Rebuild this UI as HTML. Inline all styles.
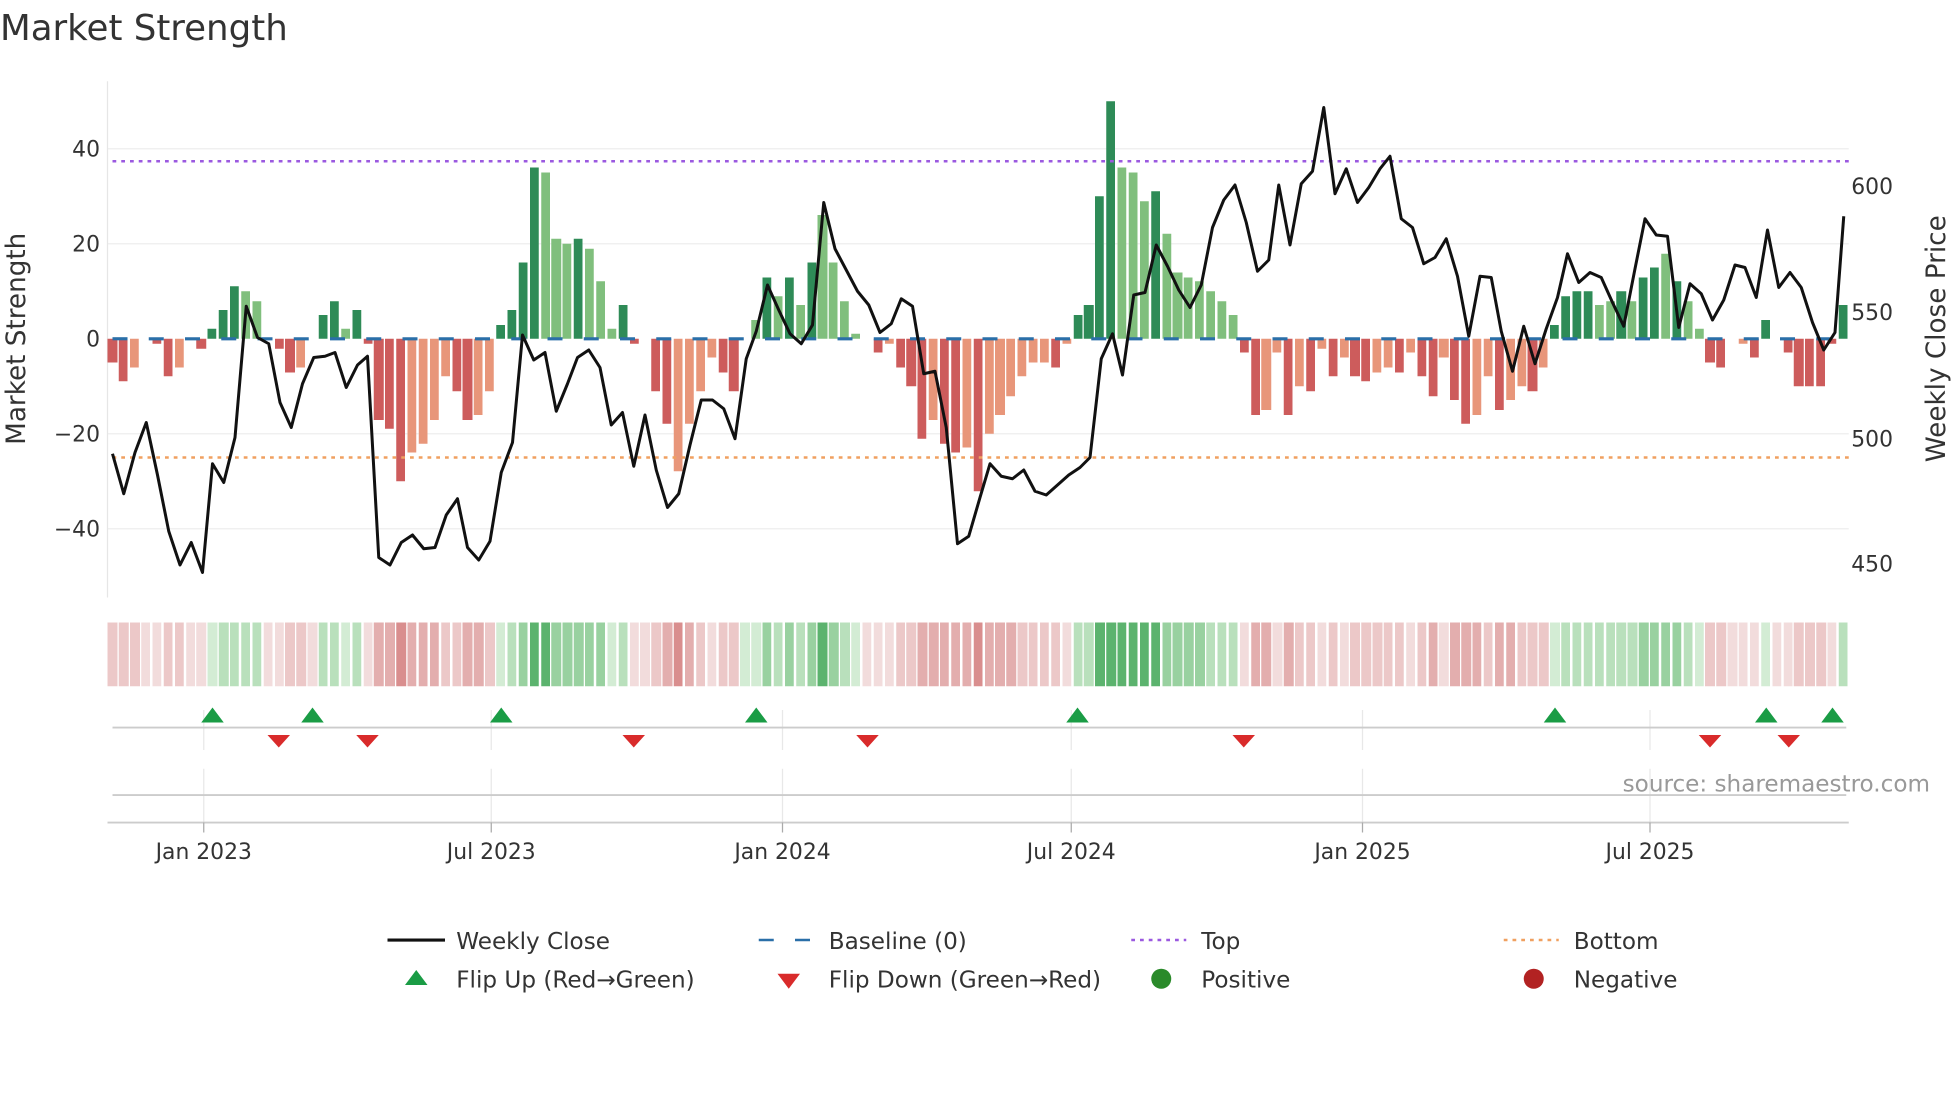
<!DOCTYPE html>
<html><head><meta charset="utf-8"><style>
html,body{margin:0;padding:0;background:#fff;overflow:hidden;}
#w{position:absolute;left:0;top:0;width:1568px;height:882px;transform:scale(1.25);transform-origin:0 0;}
svg{position:absolute;left:0;top:0;display:block;font-family:"DejaVu Sans","Liberation Sans",sans-serif;}
.row{position:absolute;left:86.4px;width:1392.2px;display:flex;justify-content:space-between;font-size:3.8px;}
.row i{display:block;width:7.2px;flex:none;}
#pos{top:65px;height:206px;align-items:flex-end;}
#neg{top:271px;height:207px;align-items:flex-start;}
#heat{top:498px;height:51px;}
#heat i{height:51px;width:7.4px;}
.a{background:#2e8b57}.b{background:#80bf7d}.c{background:#cd5c5c}.d{background:#e8967a}
.r1{background:#f2dcdc}.r2{background:#ecc8c8}.r3{background:#e3aeae}.r4{background:#d98e8e}
.g1{background:#d3ecd4}.g2{background:#b9e0bc}.g3{background:#99d1a0}.g4{background:#5cb36e}
</style></head><body><div id="w">
<svg width="1568" height="882" viewBox="0 0 1568 882" xmlns="http://www.w3.org/2000/svg">
<text x="0" y="32" font-size="28.5" fill="#333">Market Strength</text>
<g stroke="#eeeeee" stroke-width="1">
<line x1="86" x2="1479" y1="119" y2="119"/><line x1="86" x2="1479" y1="195" y2="195"/>
<line x1="86" x2="1479" y1="347" y2="347"/><line x1="86" x2="1479" y1="423" y2="423"/>
</g>
<line x1="86" x2="86" y1="65" y2="478" stroke="#e6e6e6"/>
</svg>
<div class="row" id="pos"><i></i><i></i><i></i><i></i><i></i><i></i><i></i><i></i><i></i><i class=a style=height:2em></i><i class=a style=height:6em></i><i class=a style=height:11em></i><i class=b style=height:10em></i><i class=b style=height:8em></i><i></i><i></i><i></i><i></i><i></i><i class=a style=height:5em></i><i class=a style=height:8em></i><i class=b style=height:2em></i><i class=a style=height:6em></i><i></i><i></i><i></i><i></i><i></i><i></i><i></i><i></i><i></i><i></i><i></i><i></i><i class=a style=height:3em></i><i class=a style=height:6em></i><i class=a style=height:16em></i><i class=a style=height:36em></i><i class=b style=height:35em></i><i class=b style=height:21em></i><i class=b style=height:20em></i><i class=a style=height:21em></i><i class=b style=height:19em></i><i class=b style=height:12em></i><i class=b style=height:2em></i><i class=a style=height:7em></i><i></i><i></i><i></i><i></i><i></i><i></i><i></i><i></i><i></i><i></i><i></i><i class=b style=height:4em></i><i class=a style=height:13em></i><i class=b style=height:9em></i><i class=a style=height:13em></i><i class=b style=height:7em></i><i class=a style=height:16em></i><i class=b style=height:26em></i><i class=b style=height:16em></i><i class=b style=height:8em></i><i class=b style=height:1em></i><i></i><i></i><i></i><i></i><i></i><i></i><i></i><i></i><i></i><i></i><i></i><i></i><i></i><i></i><i></i><i></i><i></i><i></i><i></i><i class=a style=height:5em></i><i class=a style=height:7em></i><i class=a style=height:30em></i><i class=a style=height:50em></i><i class=b style=height:36em></i><i class=b style=height:35em></i><i class=b style=height:29em></i><i class=a style=height:31em></i><i class=b style=height:22em></i><i class=b style=height:14em></i><i class=b style=height:13em></i><i class=b style=height:12em></i><i class=b style=height:10em></i><i class=b style=height:8em></i><i class=b style=height:5em></i><i></i><i></i><i></i><i></i><i></i><i></i><i></i><i></i><i></i><i></i><i></i><i></i><i></i><i></i><i></i><i></i><i></i><i></i><i></i><i></i><i></i><i></i><i></i><i></i><i></i><i></i><i></i><i></i><i class=a style=height:3em></i><i class=a style=height:9em></i><i class=a style=height:10em></i><i class=a style=height:10em></i><i class=b style=height:7em></i><i class=b style=height:8em></i><i class=a style=height:10em></i><i class=b style=height:8em></i><i class=a style=height:13em></i><i class=a style=height:15em></i><i class=b style=height:18em></i><i class=a style=height:12em></i><i class=b style=height:8em></i><i class=b style=height:2em></i><i></i><i></i><i></i><i></i><i></i><i class=a style=height:4em></i><i></i><i></i><i></i><i></i><i></i><i></i><i class=a style=height:7em></i></div>
<div class="row" id="neg"><i class=c style=height:5em></i><i class=c style=height:9em></i><i class=d style=height:6em></i><i></i><i class=c style=height:1em></i><i class=c style=height:8em></i><i class=d style=height:6em></i><i></i><i class=c style=height:2em></i><i></i><i></i><i></i><i></i><i></i><i></i><i class=c style=height:2em></i><i class=c style=height:7em></i><i class=d style=height:6em></i><i></i><i></i><i></i><i></i><i></i><i class=c style=height:1em></i><i class=c style=height:17em></i><i class=c style=height:19em></i><i class=c style=height:30em></i><i class=d style=height:24em></i><i class=d style=height:22em></i><i class=d style=height:17em></i><i class=d style=height:8em></i><i class=c style=height:11em></i><i class=c style=height:17em></i><i class=d style=height:16em></i><i class=d style=height:11em></i><i></i><i></i><i></i><i></i><i></i><i></i><i></i><i></i><i></i><i></i><i></i><i></i><i class=c style=height:1em></i><i></i><i class=c style=height:11em></i><i class=c style=height:18em></i><i class=d style=height:28em></i><i class=d style=height:18em></i><i class=d style=height:11em></i><i class=d style=height:4em></i><i class=c style=height:7em></i><i class=c style=height:11em></i><i></i><i></i><i></i><i></i><i></i><i></i><i></i><i></i><i></i><i></i><i></i><i></i><i class=c style=height:3em></i><i class=d style=height:1em></i><i class=c style=height:6em></i><i class=c style=height:10em></i><i class=c style=height:21em></i><i class=d style=height:17em></i><i class=c style=height:22em></i><i class=c style=height:24em></i><i class=d style=height:23em></i><i class=c style=height:32em></i><i class=d style=height:20em></i><i class=d style=height:16em></i><i class=d style=height:12em></i><i class=d style=height:8em></i><i class=d style=height:5em></i><i class=d style=height:5em></i><i class=c style=height:6em></i><i class=d style=height:1em></i><i></i><i></i><i></i><i></i><i></i><i></i><i></i><i></i><i></i><i></i><i></i><i></i><i></i><i></i><i></i><i class=c style=height:3em></i><i class=c style=height:16em></i><i class=d style=height:15em></i><i class=d style=height:3em></i><i class=c style=height:16em></i><i class=d style=height:10em></i><i class=c style=height:11em></i><i class=d style=height:2em></i><i class=c style=height:8em></i><i class=d style=height:4em></i><i class=c style=height:8em></i><i class=c style=height:9em></i><i class=d style=height:7em></i><i class=d style=height:6em></i><i class=c style=height:7em></i><i class=d style=height:3em></i><i class=c style=height:8em></i><i class=c style=height:12em></i><i class=d style=height:4em></i><i class=c style=height:13em></i><i class=c style=height:18em></i><i class=d style=height:16em></i><i class=d style=height:8em></i><i class=c style=height:15em></i><i class=d style=height:13em></i><i class=d style=height:10em></i><i class=c style=height:11em></i><i class=d style=height:6em></i><i></i><i></i><i></i><i></i><i></i><i></i><i></i><i></i><i></i><i></i><i></i><i></i><i></i><i></i><i class=c style=height:5em></i><i class=c style=height:6em></i><i></i><i class=d style=height:1em></i><i class=c style=height:4em></i><i></i><i></i><i class=c style=height:3em></i><i class=c style=height:10em></i><i class=c style=height:10em></i><i class=c style=height:10em></i><i class=c style=height:1em></i><i></i></div>
<div class="row" id="heat"><i class=r2></i><i class=r2></i><i class=r2></i><i class=r1></i><i class=r1></i><i class=r2></i><i class=r2></i><i class=r1></i><i class=r1></i><i class=g1></i><i class=g2></i><i class=g2></i><i class=g2></i><i class=g2></i><i class=r1></i><i class=r1></i><i class=r2></i><i class=r2></i><i class=r1></i><i class=g2></i><i class=g2></i><i class=g1></i><i class=g2></i><i class=r1></i><i class=r3></i><i class=r3></i><i class=r4></i><i class=r3></i><i class=r3></i><i class=r3></i><i class=r2></i><i class=r2></i><i class=r3></i><i class=r3></i><i class=r2></i><i class=g1></i><i class=g2></i><i class=g3></i><i class=g4></i><i class=g4></i><i class=g3></i><i class=g3></i><i class=g3></i><i class=g3></i><i class=g3></i><i class=g1></i><i class=g2></i><i class=r1></i><i class=r1></i><i class=r2></i><i class=r3></i><i class=r4></i><i class=r3></i><i class=r2></i><i class=r1></i><i class=r2></i><i class=r2></i><i class=g1></i><i class=g1></i><i class=g3></i><i class=g2></i><i class=g3></i><i class=g2></i><i class=g3></i><i class=g4></i><i class=g3></i><i class=g2></i><i class=g1></i><i class=r1></i><i class=r1></i><i class=r1></i><i class=r2></i><i class=r2></i><i class=r3></i><i class=r3></i><i class=r3></i><i class=r3></i><i class=r3></i><i class=r4></i><i class=r3></i><i class=r3></i><i class=r3></i><i class=r2></i><i class=r2></i><i class=r2></i><i class=r2></i><i class=r1></i><i class=g2></i><i class=g2></i><i class=g4></i><i class=g4></i><i class=g4></i><i class=g4></i><i class=g4></i><i class=g4></i><i class=g3></i><i class=g3></i><i class=g3></i><i class=g3></i><i class=g2></i><i class=g2></i><i class=g2></i><i class=r1></i><i class=r3></i><i class=r3></i><i class=r1></i><i class=r3></i><i class=r2></i><i class=r2></i><i class=r1></i><i class=r2></i><i class=r1></i><i class=r2></i><i class=r2></i><i class=r2></i><i class=r2></i><i class=r2></i><i class=r1></i><i class=r2></i><i class=r3></i><i class=r1></i><i class=r3></i><i class=r3></i><i class=r3></i><i class=r2></i><i class=r3></i><i class=r3></i><i class=r2></i><i class=r2></i><i class=r2></i><i class=g1></i><i class=g2></i><i class=g2></i><i class=g2></i><i class=g2></i><i class=g2></i><i class=g2></i><i class=g2></i><i class=g3></i><i class=g3></i><i class=g3></i><i class=g3></i><i class=g2></i><i class=g1></i><i class=r2></i><i class=r2></i><i class=r1></i><i class=r1></i><i class=r1></i><i class=g1></i><i class=r1></i><i class=r1></i><i class=r2></i><i class=r2></i><i class=r2></i><i class=r1></i><i class=g2></i></div>
<svg width="1568" height="882" viewBox="0 0 1568 882" xmlns="http://www.w3.org/2000/svg">
<g font-size="17.5" fill="#333" text-anchor="end">
<text x="80" y="125">40</text><text x="80" y="201">20</text><text x="80" y="277">0</text>
<text x="80" y="353">−20</text><text x="80" y="429">−40</text></g>
<g font-size="17.5" fill="#333">
<text x="1481" y="155">600</text><text x="1481" y="256">550</text><text x="1481" y="357">500</text><text x="1481" y="457">450</text></g>
<text transform="translate(20,271) rotate(-90)" font-size="21" fill="#333" text-anchor="middle">Market Strength</text>
<text transform="translate(1556,271) rotate(-90)" font-size="21" fill="#333" text-anchor="middle">Weekly Close Price</text>
<line x1="90" x2="1479" y1="129" y2="129" stroke="#9b59e0" stroke-width="2" stroke-dasharray="3,4"/>
<line x1="90" x2="1479" y1="366" y2="366" stroke="#f0a060" stroke-width="2" stroke-dasharray="3,4"/>
<line x1="90" x2="1479" y1="271" y2="271" stroke="#2a6fa8" stroke-width="2.5" stroke-dasharray="12,17"/>
<polyline fill="none" stroke="#111" stroke-width="2.4" stroke-linejoin="round" points="90,363 99,395 108,362 117,338 126,380 135,425 144,452 153,434 162,458 170,371 179,386 188,350 197,245 206,270 215,275 224,322 233,342 242,307 251,286 260,285 268,282 277,310 286,292 294,285 303,446 312,452 321,434 330,428 339,439 348,438 357,412 366,399 374,438 383,448 392,433 401,378 410,354 418,268 427,288 436,282 445,329 454,307 462,286 471,280 480,294 489,340 498,330 507,373 516,332 525,376 534,406 543,395 552,356 561,320 570,320 579,327 588,351 597,287 605,265 614,228 623,248 632,267 641,275 650,260 659,162 668,199 677,216 686,233 695,244 704,266 713,259 721,239 730,245 739,299 748,297 757,342 766,435 775,429 784,398 792,371 801,381 810,383 819,376 828,393 837,396 846,388 855,380 864,374 872,366 881,287 890,267 898,300 907,236 916,234 925,196 934,213 943,232 952,246 961,228 970,182 979,160 988,148 997,178 1006,217 1015,208 1023,148 1032,196 1041,147 1050,137 1059,86 1068,155 1077,135 1086,162 1095,150 1104,135 1112,125 1121,175 1130,182 1139,211 1148,206 1157,191 1166,221 1175,269 1184,221 1193,222 1201,265 1210,297 1219,261 1228,291 1237,263 1246,238 1254,203 1263,226 1272,218 1281,222 1290,242 1299,261 1308,215 1316,175 1325,188 1334,189 1343,262 1352,227 1361,235 1370,256 1379,240 1388,212 1396,214 1405,238 1414,184 1423,230 1432,218 1441,230 1450,258 1459,280 1468,266 1475,173"/>
<g stroke="#e8e8e8" stroke-width="1">
<line x1="163" x2="163" y1="568" y2="600"/><line x1="393" x2="393" y1="568" y2="600"/><line x1="626" x2="626" y1="568" y2="600"/><line x1="857" x2="857" y1="568" y2="600"/><line x1="1090" x2="1090" y1="568" y2="600"/><line x1="1320" x2="1320" y1="568" y2="600"/>
<line x1="163" x2="163" y1="615" y2="658"/><line x1="393" x2="393" y1="615" y2="658"/><line x1="626" x2="626" y1="615" y2="658"/><line x1="857" x2="857" y1="615" y2="658"/><line x1="1090" x2="1090" y1="615" y2="658"/><line x1="1320" x2="1320" y1="615" y2="658"/>
</g>
<line x1="90" x2="1477" y1="582" y2="582" stroke="#ccc" stroke-width="1.5"/>
<line x1="90" x2="1477" y1="636" y2="636" stroke="#ccc" stroke-width="1.5"/>
<line x1="86" x2="1479" y1="658" y2="658" stroke="#ccc" stroke-width="1.5"/>
<g stroke="#aaa"><line x1="163" x2="163" y1="658" y2="666"/><line x1="393" x2="393" y1="658" y2="666"/><line x1="626" x2="626" y1="658" y2="666"/><line x1="857" x2="857" y1="658" y2="666"/><line x1="1090" x2="1090" y1="658" y2="666"/><line x1="1320" x2="1320" y1="658" y2="666"/></g>
<g fill="#1a9c45">
<polygon points="161,578 179,578 170,566"/><polygon points="241,578 259,578 250,566"/><polygon points="392,578 410,578 401,566"/><polygon points="596,578 614,578 605,566"/><polygon points="853,578 871,578 862,566"/><polygon points="1235,578 1253,578 1244,566"/><polygon points="1404,578 1422,578 1413,566"/><polygon points="1457,578 1475,578 1466,566"/>
</g>
<g fill="#d92b2b">
<polygon points="214,588 232,588 223,598"/><polygon points="285,588 303,588 294,598"/><polygon points="498,588 516,588 507,598"/><polygon points="685,588 703,588 694,598"/><polygon points="986,588 1004,588 995,598"/><polygon points="1359,588 1377,588 1368,598"/><polygon points="1422,588 1440,588 1431,598"/>
</g>
<text x="1544" y="633" font-size="18.5" fill="#999" text-anchor="end">source: sharemaestro.com</text>
<g font-size="17.5" fill="#333" text-anchor="middle">
<text x="163" y="687">Jan 2023</text><text x="393" y="687">Jul 2023</text><text x="626" y="687">Jan 2024</text>
<text x="857" y="687">Jul 2024</text><text x="1090" y="687">Jan 2025</text><text x="1320" y="687">Jul 2025</text></g>
<g font-size="18.5" fill="#333">
<line x1="310" x2="356" y1="752" y2="752" stroke="#111" stroke-width="2.5"/>
<text x="365" y="759">Weekly Close</text>
<line x1="607" x2="651" y1="752" y2="752" stroke="#2a6fa8" stroke-width="2" stroke-dasharray="12,17"/>
<text x="663" y="759">Baseline (0)</text>
<line x1="905" x2="949" y1="752" y2="752" stroke="#9b59e0" stroke-width="2" stroke-dasharray="3,4"/>
<text x="961" y="759">Top</text>
<line x1="1203" x2="1247" y1="752" y2="752" stroke="#f0a060" stroke-width="2" stroke-dasharray="3,4"/>
<text x="1259" y="759">Bottom</text>
<polygon points="324,788 342,788 333,776" fill="#1a9c45"/>
<text x="365" y="790">Flip Up (Red→Green)</text>
<polygon points="622,779 640,779 631,791" fill="#d92b2b"/>
<text x="663" y="790">Flip Down (Green→Red)</text>
<circle cx="929" cy="783" r="8" fill="#2a8a2a"/>
<text x="961" y="790">Positive</text>
<circle cx="1227" cy="783" r="8" fill="#b22222"/>
<text x="1259" y="790">Negative</text>
</g>
</svg>
</div></body></html>
